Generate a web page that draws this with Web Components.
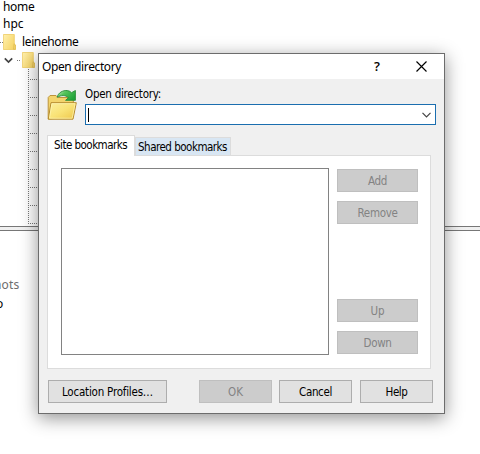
<!DOCTYPE html>
<html lang="en"><head><meta charset="utf-8"><title>Open directory</title>
<style>
html,body{margin:0;width:480px;height:454px;overflow:hidden;background:#fff}
body{position:relative;font:12px/18px "Noto Sans","Open Sans",sans-serif;color:#000}
open-dialog{position:absolute;left:38px;top:53px}
</style></head><body>
<file-panes></file-panes>
<open-dialog></open-dialog>
<script>
const attach=(el,html)=>{el.attachShadow({mode:'open'}).innerHTML=html;return el.shadowRoot};

/* Label whose letter spacing is adjusted so the text takes the width in `w`. */
customElements.define('fit-label',class extends HTMLElement{
  connectedCallback(){
    if(this.shadowRoot)return;
    const r=attach(this,`<style>:host{display:inline-block;white-space:nowrap}span{display:inline-block}</style><span><slot></slot></span>`);
    const w=+this.getAttribute('w'),s=r.querySelector('span'),n=this.textContent.length;
    if(w){s.style.letterSpacing=(w-s.getBoundingClientRect().width)/n+'px'}
  }
});

customElements.define('tree-folder',class extends HTMLElement{
  connectedCallback(){attach(this,`<style>:host{display:block;width:13px;height:16px}svg{display:block}</style>
  <svg width="13" height="16" viewBox="0 0 13 16"><defs><linearGradient id="g" x2="1" y2=".6"><stop stop-color="#fff0ae"/><stop offset="1" stop-color="#f6d567"/></linearGradient></defs>
  <path d="M.4.5H11.3V10L12.6 11V15.5H.4Z" fill="url(#g)" stroke="#edcc62" stroke-width=".8"/><path d="M11 9.8L10.5 15.3H12.3V11Z" fill="#f5d66f" stroke="#d8b64b" stroke-width=".6"/></svg>`)}
});

customElements.define('file-panes',class extends HTMLElement{
  connectedCallback(){attach(this,`<style>
  :host{display:flex;flex-direction:column;width:480px;height:454px;background:#fff}
  .top{height:226px}
  .row{height:18px;display:flex;align-items:center;padding-left:3px}
  .first{height:15px;align-items:flex-start}.first fit-label{line-height:13px;height:13px}
  .leine{padding-left:0}.dot{width:3px;height:1px;background:repeating-linear-gradient(90deg,#777 0 1px,transparent 1px 2px)}
  .leine fit-label{margin-left:6px}
  .sub{padding-left:4px}.sub .dot{margin:0 1px 0 4px;width:4px}
  .tree{margin-left:28px;height:154px;width:12px;display:flex;flex-direction:column;background:repeating-linear-gradient(#777 0 1px,transparent 1px 2px) left/1px 100% no-repeat}
  .branch{height:18px;flex:none;background:repeating-linear-gradient(90deg,#777 0 1px,transparent 1px 2px) 0 10px/12px 1px no-repeat}
  .split{height:3px;background:#f0f0f0;border-top:1px solid #777;border-bottom:1px solid #777}
  .files{display:flex;flex-direction:column;align-items:flex-start;padding-top:45px;flex:1}
  .files fit-label{height:18px}
  .shots{color:#6d6d6d;margin-left:-6px}.last{margin:1px 0 0 -4px}
  </style>
  <div class="top"><div class="row first"><fit-label w="31.5">home</fit-label></div>
  <div class="row"><fit-label w="20.5">hpc</fit-label></div>
  <div class="row leine"><i class="dot"></i><tree-folder></tree-folder><fit-label w="56.5">leinehome</fit-label></div>
  <div class="row sub"><svg width="9" height="7" viewBox="0 0 9 7"><path d="M.8 1.3L4.5 5L8.2 1.3" fill="none" stroke="#444" stroke-width="1.7"/></svg><i class="dot"></i><tree-folder></tree-folder></div>
  <div class="tree">${'<i class="branch"></i>'.repeat(9)}</div></div>
  <div class="split"></div>
  <div class="files"><fit-label class="shots" w="25.5">hots</fit-label><fit-label class="last">o</fit-label></div>`)}
});

customElements.define('push-button',class extends HTMLElement{
  connectedCallback(){attach(this,`<style>
  :host{box-sizing:border-box;display:flex;align-items:center;justify-content:center;width:73px;height:23px;border:1px solid #adadad;background:#e1e1e1;color:#000}
  :host([disabled]){background:#ccc;border-color:#bfbfbf;color:#838383}
  </style><slot></slot>`)}
});

customElements.define('directory-icon',class extends HTMLElement{
  connectedCallback(){attach(this,`<style>:host{display:block;width:30px;height:32px}svg{display:block}</style>
  <svg width="30" height="32" viewBox="0 0 30 32"><defs>
  <linearGradient id="f" x2="1" y2="1"><stop stop-color="#fbf0a0"/><stop offset=".5" stop-color="#f9e377"/><stop offset="1" stop-color="#edc548"/></linearGradient>
  <linearGradient id="a" x2="1" y2=".6"><stop stop-color="#d6f4d2"/><stop offset=".4" stop-color="#56c45b"/><stop offset="1" stop-color="#22a43a"/></linearGradient></defs>
  <path d="M1.2 29V7.5L3 5.5H9L11 7.5H25Q26.3 7.5 26.3 9V14L25 27Z" fill="#f3d46c" stroke="#bd943c"/>
  <path d="M4 12.7H29.3L26 29.2H1.3Z" fill="url(#f)" stroke="#b58b2e"/>
  <path d="M4.9 13.7H28.1L25.2 28.2H2.5Z" fill="none" stroke="#fff6b4" stroke-width=".7"/>
  <path d="M10.2 7.3C11 2.8 16 0 20.5.6Q23 1 24.5 2.7L28.4.5V10.3H18.6L21.5 7.7C18.5 4.9 14.2 5 10.2 7.3Z" fill="url(#a)" stroke="#278b37" stroke-width=".9" stroke-linejoin="round"/></svg>`)}
});

customElements.define('bookmark-tabs',class extends HTMLElement{
  connectedCallback(){attach(this,`<style>
  :host{display:block;width:384px}
  .tabs{display:flex;align-items:flex-end;height:20px}
  .tab{box-sizing:border-box;border:1px solid #dcdcdc;border-bottom:0;white-space:nowrap}
  .on{width:88px;height:21px;margin-bottom:-1px;z-index:1;background:#fff;padding-left:6px;line-height:18px;position:relative}
  .off{width:96px;height:18px;background:#d8e6f3;padding-left:2px;line-height:18px}
  .panel{box-sizing:border-box;height:214px;background:#fff;border:1px solid #dcdcdc;padding:12px 12px 12px 13px;display:flex;justify-content:space-between}
  .list{box-sizing:border-box;width:268px;height:187px;border:1px solid #828282;background:#fff}
  .buttons{display:flex;flex-direction:column;height:187px;padding-top:1px;box-sizing:border-box}
  .buttons push-button{width:81px;margin-bottom:9px}
  .buttons .up{margin-top:auto}.buttons push-button:last-child{margin-bottom:1px}
  </style>
  <div class="tabs"><div class="tab on"><fit-label w="73">Site bookmarks</fit-label></div><div class="tab off"><fit-label w="89">Shared bookmarks</fit-label></div></div>
  <div class="panel"><div class="list"></div><div class="buttons">
  <push-button disabled><fit-label w="19">Add</fit-label></push-button><push-button disabled><fit-label w="40">Remove</fit-label></push-button>
  <push-button class="up" disabled><fit-label w="14">Up</fit-label></push-button><push-button disabled><fit-label w="28">Down</fit-label></push-button></div></div>`)}
});

customElements.define('open-dialog',class extends HTMLElement{
  connectedCallback(){attach(this,`<style>
  :host{box-sizing:border-box;display:flex;flex-direction:column;width:407px;height:361px;border:1px solid #6c6c6c;background:#f0f0f0;box-shadow:0 4px 17px rgba(0,0,0,.43)}
  .entry,bookmark-tabs,footer{font:11.5px/18px "DejaVu Sans Condensed","DejaVu Sans",sans-serif;font-stretch:condensed}
  header{height:25px;background:#fff;display:flex;align-items:center;padding:0 17px 0 3px;box-sizing:border-box}
  header fit-label{margin-right:auto}.q{font:600 13px/18px "Open Sans",sans-serif;margin:-2px 36px 0 0}
  .entry{display:flex;height:46px;padding:0 8px}
  directory-icon{margin-top:11px}
  .field{margin-left:8px;padding-top:7px;width:351px;flex:none}
  .field>fit-label{display:block;height:18px;line-height:17px}
  .combo{box-sizing:border-box;height:21px;border:1px solid #1b6eaf;background:#fff;display:flex;align-items:center;justify-content:space-between;padding:0 4px 0 2px}
  .caret{width:1px;height:14px;background:#000}
  bookmark-tabs{margin:10px 0 0 8px}
  footer{display:flex;padding:11px 0 0 9px}
  .loc{width:119px}.ok{margin-left:32px}.cancel{margin-left:7px}.help{margin-left:8px}
  </style>
  <header><fit-label w="79">Open directory</fit-label><span class="q">?</span>
  <svg width="11" height="11" viewBox="0 0 11 11"><path d="M.5 .5L10.5 10.5M10.5 .5L.5 10.5" stroke="#000" stroke-width="1.15"/></svg></header>
  <div class="entry"><directory-icon></directory-icon><div class="field"><fit-label w="76">Open directory:</fit-label>
  <div class="combo"><i class="caret"></i><svg width="9" height="6" viewBox="0 0 9 6"><path d="M.5 .8L4.5 4.8L8.5 .8" fill="none" stroke="#444" stroke-width="1.2"/></svg></div></div></div>
  <bookmark-tabs></bookmark-tabs>
  <footer><push-button class="loc"><fit-label w="91">Location Profiles…</fit-label></push-button><push-button class="ok" disabled><fit-label w="15">OK</fit-label></push-button>
  <push-button class="cancel"><fit-label w="33">Cancel</fit-label></push-button><push-button class="help"><fit-label w="22">Help</fit-label></push-button></footer>`)}
});
</script></body></html>
